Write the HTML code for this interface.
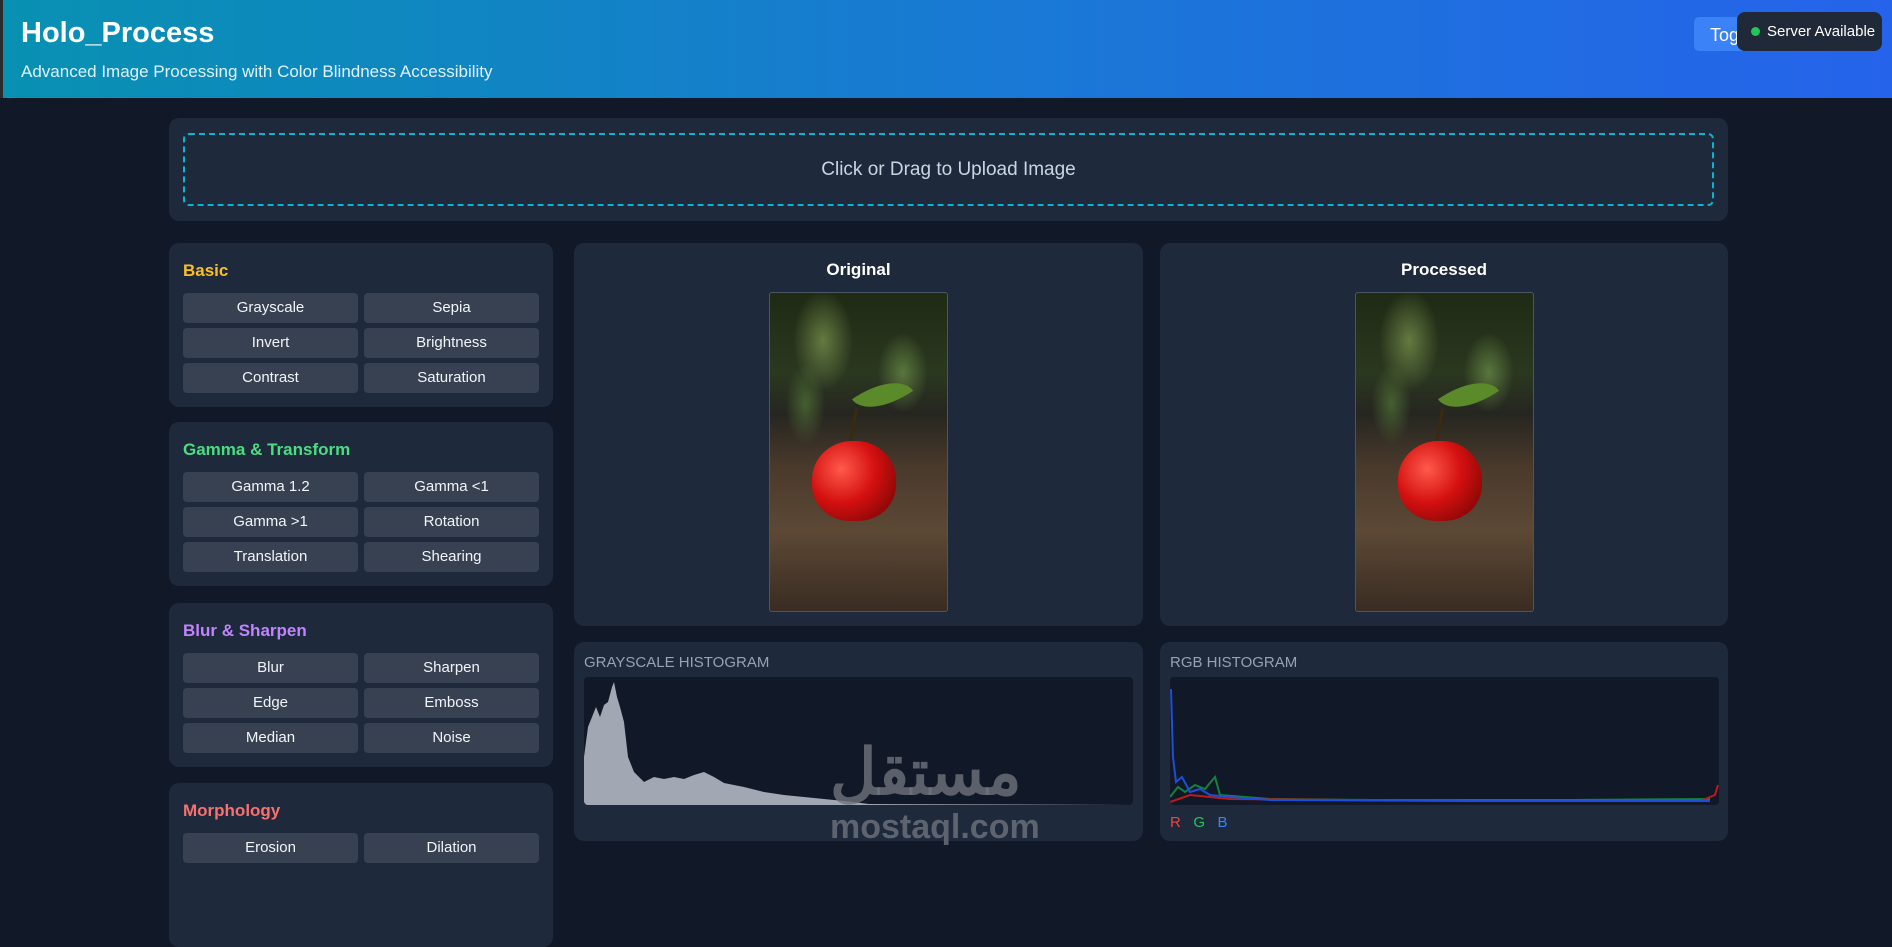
<!DOCTYPE html>
<html><head><meta charset="utf-8"><style>
*{box-sizing:border-box;margin:0;padding:0}
body{width:1892px;height:866px;overflow:hidden;background:#111827;font-family:"Liberation Sans",sans-serif;color:#e5e7eb;position:relative}
.hdr{position:absolute;left:0;top:0;width:1892px;height:98px;background:linear-gradient(90deg,#0891b2,#1a78d6 55%,#2563eb);border-left:3px solid #2b2b2b}
.hdr h1{position:absolute;left:18px;top:17px;font-size:29px;font-weight:bold;color:#fff}
.hdr p{position:absolute;left:18px;top:62px;font-size:17px;color:#e0f2fe}
.tog{position:absolute;left:1694px;top:17px;width:60px;height:34px;background:#3b82f6;border-radius:5px;color:#fff;font-size:18px;padding:8px 0 0 16px}
.tip{position:absolute;left:1737px;top:12px;width:145px;height:39px;background:#1f2937;border-radius:8px;color:#fff;font-size:15px;padding:11px 0 0 30px}
.tip:before{content:"";position:absolute;left:14px;top:15px;width:9px;height:9px;border-radius:50%;background:#22c55e}
.card{position:absolute;background:#1e293b;border-radius:10px}
.up{left:169px;top:118px;width:1559px;height:103px}
.dash{position:absolute;left:14px;top:15px;right:14px;bottom:15px;border:2px dashed #06b6d4;border-radius:6px;text-align:center;font-size:19px;color:#cbd5e1;padding-top:24px}
.pan{left:169px;width:384px;height:164px}
.pan h3{position:absolute;left:14px;top:18px;font-size:17px;font-weight:bold}
.b{position:absolute;width:175px;height:30px;background:#374151;border-radius:4px;font-size:15px;color:#f1f5f9;text-align:center;line-height:30px}
.c1{left:14px}.c2{left:195px}
.r1{top:50px}.r2{top:85px}.r3{top:120px}
.img{left:574px;top:243px;width:569px;height:383px}
.img h2,.img2 h2{position:absolute;width:100%;text-align:center;top:17px;font-size:17px;font-weight:bold;color:#fff}
.pic{position:absolute;left:195px;top:49px;width:179px;height:320px;border:1px solid #4b5563;border-radius:3px;overflow:hidden;
background:radial-gradient(ellipse 30px 50px at 30% 15%,rgba(140,170,90,.6),transparent),radial-gradient(ellipse 25px 40px at 75% 25%,rgba(120,160,80,.6),transparent),radial-gradient(ellipse 20px 40px at 20% 35%,rgba(90,130,60,.6),transparent),linear-gradient(180deg,#1f2a14 0%,#2b3820 25%,#262620 38%,#4a3a2c 55%,#5c4835 75%,#3a2c22 100%)}
.apple{position:absolute;left:42px;top:148px;width:84px;height:80px;border-radius:48% 48% 45% 45%;background:radial-gradient(circle at 35% 35%,#ff5a4a,#d41010 45%,#7a0505 90%)}
.leaf{position:absolute;left:85px;top:88px;width:55px;height:28px;background:#5a8a2a;border-radius:0 100% 0 100%;transform:rotate(-35deg)}
.stem{position:absolute;left:82px;top:115px;width:3px;height:36px;background:#3a2a10;transform:rotate(10deg)}
.hist{top:642px;height:199px}
.hist .l{position:absolute;left:10px;top:12px;font-size:15px;color:#94a3b8}
.cv{position:absolute;left:10px;top:35px;width:549px;height:128px;background:#111827;border-radius:4px;overflow:hidden}
.wm{position:absolute;color:rgba(110,115,125,.8);font-weight:bold;font-family:"Liberation Sans","Noto Sans CJK SC",sans-serif}
</style></head><body>
<div class="hdr"><h1>Holo_Process</h1><p>Advanced Image Processing with Color Blindness Accessibility</p></div>
<div class="tog">Tog</div>
<div class="tip">Server Available</div>
<div class="card up"><div class="dash">Click or Drag to Upload Image</div></div>

<div class="card pan" style="top:243px"><h3 style="color:#fbbf24">Basic</h3>
<div class="b c1 r1">Grayscale</div><div class="b c2 r1">Sepia</div><div class="b c1 r2">Invert</div><div class="b c2 r2">Brightness</div><div class="b c1 r3">Contrast</div><div class="b c2 r3">Saturation</div></div>
<div class="card pan" style="top:422px"><h3 style="color:#4ade80">Gamma &amp; Transform</h3>
<div class="b c1 r1">Gamma 1.2</div><div class="b c2 r1">Gamma &lt;1</div><div class="b c1 r2">Gamma &gt;1</div><div class="b c2 r2">Rotation</div><div class="b c1 r3">Translation</div><div class="b c2 r3">Shearing</div></div>
<div class="card pan" style="top:603px"><h3 style="color:#c084fc">Blur &amp; Sharpen</h3>
<div class="b c1 r1">Blur</div><div class="b c2 r1">Sharpen</div><div class="b c1 r2">Edge</div><div class="b c2 r2">Emboss</div><div class="b c1 r3">Median</div><div class="b c2 r3">Noise</div></div>
<div class="card pan" style="top:783px"><h3 style="color:#f87171">Morphology</h3>
<div class="b c1 r1">Erosion</div><div class="b c2 r1">Dilation</div></div>

<div class="card img"><h2>Original</h2><div class="pic"><div class="stem"></div><div class="leaf"></div><div class="apple"></div></div></div>
<div class="card img" style="left:1160px;width:568px"><h2>Processed</h2><div class="pic"><div class="stem"></div><div class="leaf"></div><div class="apple"></div></div></div>

<div class="card hist" style="left:574px;width:569px"><div class="l">GRAYSCALE HISTOGRAM</div>
<div class="cv"><svg width="549" height="128"><polygon fill="#a1a7b3" points="0,128 0,80 4,50 8,40 12,30 16,40 20,28 24,25 28,10 30,5 33,20 36,30 40,45 44,80 50,95 60,105 70,100 80,102 90,100 100,102 110,98 120,95 130,100 140,106 160,110 180,115 200,118 220,120 240,122 260,124 285,127 549,128 549,128"/></svg></div></div>
<div class="card hist" style="left:1160px;width:568px"><div class="l">RGB HISTOGRAM</div>
<div class="cv"><svg width="549" height="128"><polyline fill="none" stroke="#15803d" stroke-width="2" points="0,120 8,110 15,115 25,108 35,112 45,100 50,118 100,122 200,123 400,123 540,122"/><polyline fill="none" stroke="#b91c1c" stroke-width="2" points="0,125 20,118 60,122 300,124 530,124 545,118 548,108"/><polyline fill="none" stroke="#1d4ed8" stroke-width="2" points="1,12 3,80 6,105 12,100 20,115 30,112 40,118 60,120 100,123 300,124 540,124"/></svg></div>
<div style="position:absolute;left:10px;top:172px;font-size:15px"><span style="color:#ef4444">R</span>&nbsp;&nbsp; <span style="color:#22c55e">G</span>&nbsp;&nbsp; <span style="color:#3b82f6">B</span></div></div>

<div class="wm" style="left:830px;top:735px;font-size:64px">مستقل</div>
<div class="wm" style="left:830px;top:808px;font-size:34px">mostaql.com</div>
</body></html>
